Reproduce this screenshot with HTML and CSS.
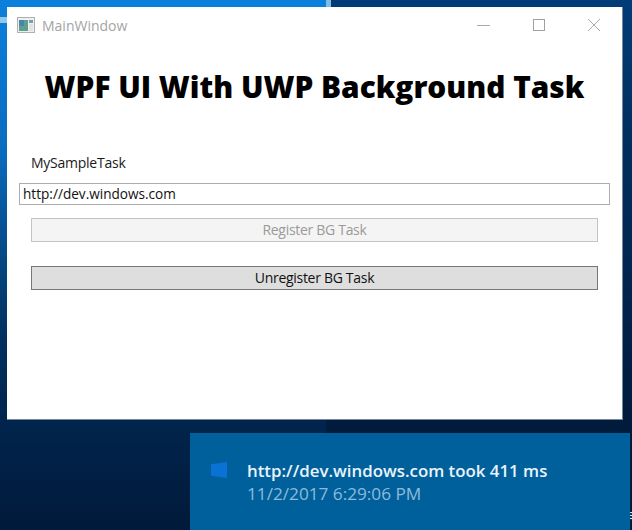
FILE: index.html
```html
<!DOCTYPE html>
<html lang="en">
<head>
<meta charset="utf-8">
<title>MainWindow</title>
<link rel="stylesheet" href="styles.css">
</head>
<body>
<div class="desktop">
  <div class="beam"></div>
  <div class="seam"></div>
  <div class="edge-mark"></div>
  <main class="window">
    <header class="titlebar">
      <svg class="app-icon" width="18" height="16" viewBox="0 0 18 16">
        <rect x="0.5" y="0.5" width="17" height="15" fill="#efefef" stroke="#b0b0b0"/>
        <rect x="2" y="3" width="9" height="11" fill="#5f9f8f"/>
        <rect x="2" y="3" width="5" height="6" fill="#4a86a8"/>
        <rect x="12" y="3" width="4" height="3" fill="#6fa5a2"/>
        <rect x="12" y="7" width="4" height="7" fill="#e2e2e2"/>
      </svg>
      <span class="window-title">MainWindow</span>
      <div class="controls">
        <svg class="control" width="14" height="14" viewBox="0 0 14 14"><path d="M0 7.5H13" stroke="#aaa" fill="none"/></svg>
        <svg class="control" width="14" height="14" viewBox="0 0 14 14"><rect x="1.5" y="1.5" width="11" height="11" stroke="#a0a0a0" fill="none"/></svg>
        <svg class="control" width="14" height="14" viewBox="0 0 14 14"><path d="M1 1L13 13M13 1L1 13" stroke="#aaa" fill="none"/></svg>
      </div>
    </header>
    <h1 class="heading">WPF UI With UWP Background Task</h1>
    <p class="task-name">MySampleTask</p>
    <div class="url-input">http://dev.windows.com</div>
    <div class="actions">
      <button class="btn btn-disabled" type="button">Register BG Task</button>
      <button class="btn" type="button">Unregister BG Task</button>
    </div>
  </main>
  <aside class="toast">
    <svg class="toast-logo" width="16" height="16" viewBox="0 0 16 16">
      <path d="M0 2.2L16 0V16L0 13.8Z" fill="#0a72d4"/>
    </svg>
    <div class="toast-body">
      <div class="toast-title">http://dev.windows.com took 411 ms</div>
      <div class="toast-time">11/2/2017 6:29:06 PM</div>
    </div>
  </aside>
</div>
</body>
</html>
```
FILE: styles.css
```css
* { box-sizing: border-box; }
html, body { margin: 0; padding: 0; }
body { font-family: "Open Sans", "Noto Sans", sans-serif; }

.desktop {
  position: relative;
  width: 632px;
  height: 530px;
  overflow: hidden;
  background:
    linear-gradient(180deg, #0a80dc 0%, #0a6cbf 28%, #054a88 47%, #02305f 64%, #01244c 80%, #011a3a 100%) left top / 326px 100% no-repeat,
    linear-gradient(180deg, #013c78 0%, #01305f 25%, #012650 50%, #011b3d 78%, #011a3a 100%);
}
.beam {
  position: absolute;
  left: 0;
  top: 17px;
  width: 8px;
  height: 6px;
  background: #8fc8e8;
}
.seam {
  position: absolute;
  left: 326px;
  top: 0;
  width: 5px;
  height: 7px;
  background: #7fbde0;
}
.edge-mark {
  position: absolute;
  left: 630px;
  top: 512px;
  width: 2px;
  height: 8px;
  background: repeating-linear-gradient(180deg, #d8e2ea 0 1px, #003a66 1px 3px);
}
.window {
  position: absolute;
  left: 7px;
  top: 7px;
  width: 616px;
  height: 413px;
  background: #fff;
  border-right: 1px solid #77879b;
  border-bottom: 1px solid #77879b;
  display: flex;
  flex-direction: column;
}
.titlebar {
  display: flex;
  align-items: center;
  height: 36px;
  padding-left: 10px;
  flex: none;
}
.app-icon { flex: none; }
.window-title {
  margin-left: 7px;
  font-size: 14px;
  color: #a4a4a4;
}
.controls {
  margin-left: auto;
  margin-right: 21px;
  display: flex;
  gap: 41px;
  margin-top: -1px;
}
.heading {
  margin: 24px 0 0;
  text-align: center;
  font-size: 29.8px;
  line-height: 40px;
  font-weight: 800;
  color: #000;
}
.task-name {
  margin: 46px 0 0 24px;
  font-size: 14px;
  line-height: 20px;
  color: #1a1a1a;
  letter-spacing: -0.25px;
}
.url-input {
  margin: 10px 12px 0;
  height: 22px;
  border: 1px solid #adadad;
  padding-left: 3px;
  font-size: 13.6px;
  line-height: 20px;
  color: #111;
}
.actions {
  margin: 13px 24px 0;
  display: flex;
  flex-direction: column;
  gap: 24px;
}
.btn {
  display: block;
  width: 100%;
  height: 24px;
  padding: 0;
  border: 1px solid #777;
  border-radius: 0;
  background: #dedede;
  font-family: inherit;
  font-size: 14px;
  line-height: 22px;
  color: #111;
  letter-spacing: -0.3px;
}
.btn-disabled {
  border-color: #c4c4c4;
  background: #f4f4f4;
  color: #9a9a9a;
}
.toast {
  position: absolute;
  left: 190px;
  top: 433px;
  width: 440px;
  height: 97px;
  background: #00609c;
  display: flex;
  align-items: flex-start;
  padding: 28px 0 0 21px;
}
.toast-logo { flex: none; margin-top: 1px; }
.toast-body { margin-left: 20px; margin-top: -2px; }
.toast-title {
  font-size: 16.85px;
  line-height: 23px;
  font-weight: 600;
  color: #eaf3f9;
}
.toast-time {
  font-size: 17.2px;
  line-height: 24px;
  color: #8dbbd8;
}
```
